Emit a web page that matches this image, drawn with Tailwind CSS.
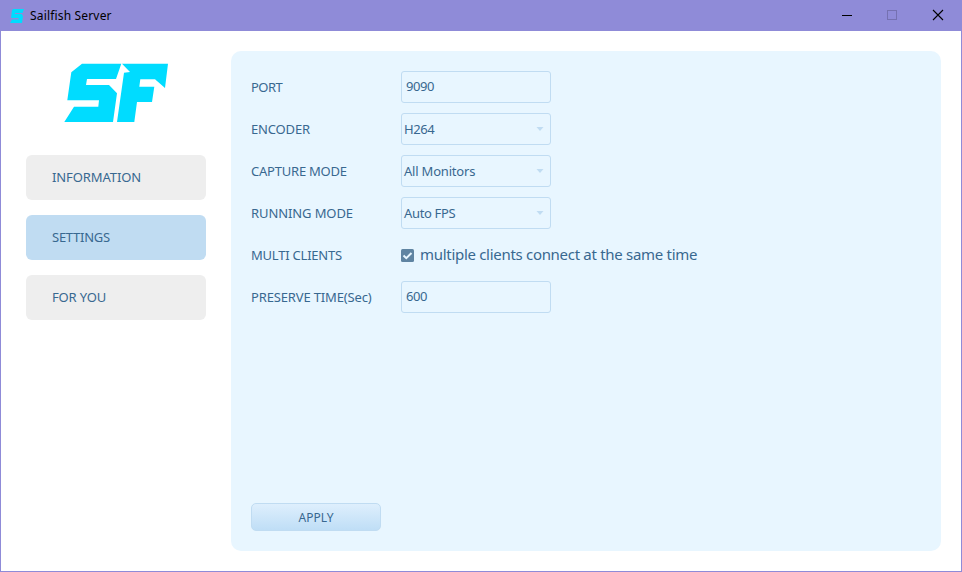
<!DOCTYPE html>
<html lang="en">
<head>
<meta charset="utf-8">
<title>Sailfish Server</title>
<script src="https://cdn.jsdelivr.net/npm/@tailwindcss/browser@4"></script>
</head>
<body class="overflow-hidden bg-white">
<div class="flex h-[572px] w-[962px] flex-col border border-[#8f8bd8] bg-white font-['Noto_Sans','Open_Sans',sans-serif] text-[13px] leading-[18px] text-[#386890]">
  <header class="flex h-[30px] shrink-0 items-center bg-[#8f8bd8] pl-[9px] text-black">
    <svg class="mr-[6px] mb-px h-[14px] w-[14px]" viewBox="0 0 14 14" fill="#00dcff"><path d="M3 0H14L12.500 4H5V5H11.500L13 7L12 14H0L2 10.500H8.500V9H1L2 1.500Z"/></svg>
    <span class="text-[12px] tracking-[0.17px]">Sailfish Server</span>
    <svg class="ml-auto h-[30px] w-[138px]" viewBox="0 0 138 30" fill="none" shape-rendering="crispEdges">
      <path d="M19 14.500H29" stroke="#000"/>
      <rect x="64.500" y="9.500" width="9" height="9" stroke="#7571b1"/>
      <path d="M110 9L120 19M120 9L110 19" stroke="#000" stroke-width="1.100" shape-rendering="auto"/>
    </svg>
  </header>
  <div class="flex flex-1">
    <nav class="flex w-[205px] flex-col pl-[25px]">
      <svg class="mt-8 mb-8 ml-[37px] h-[60px] w-[108px]" viewBox="63 63 108 60" fill="#00dcff">
        <path d="M82 63.700H121.300L116 79H87L86 85H109L117 93.300L113 122H64.300L74 106.700H98.300L99 100.300H67.300L71.300 72.300Z"/>
        <path d="M122 63.700H168L165 88L155 79.300H140.300L139.300 86.700H154.300L152 102H137L134.300 122H117L124 72.700L130 72Z"/>
      </svg>
      <div class="flex flex-col gap-[15px]">
        <div class="flex h-[45px] items-center rounded-md bg-[#eeeeee] pb-0.5 pl-[26px]"><span class="tracking-[-0.1px]">INFORMATION</span></div>
        <div class="flex h-[45px] items-center rounded-md bg-[#c0dcf2] pb-0.5 pl-[26px]"><span class="tracking-[-0.25px]">SETTINGS</span></div>
        <div class="flex h-[45px] items-center rounded-md bg-[#eeeeee] pb-0.5 pl-[26px]"><span class="tracking-[-0.15px]">FOR YOU</span></div>
      </div>
    </nav>
    <main class="mt-5 ml-[25px] flex h-[500px] w-[710px] flex-col rounded-[10px] bg-[#e8f6ff] px-5 pt-5 pb-5">
      <div class="grid grid-cols-[150px_1fr] items-center gap-y-[10px]">
        <span class="tracking-[-0.5px]">PORT</span>
        <div class="flex h-8 w-[150px] items-center rounded-[3px] border border-[#c0dcf2] px-1 pb-0.5 tracking-[-0.4px]">9090</div>
        <span class="tracking-[-0.15px]">ENCODER</span>
        <div class="flex h-8 w-[150px] items-center justify-between rounded-[3px] border border-[#c0dcf2] pr-[6px] pl-[2px]"><span class="tracking-[-0.4px]">H264</span><svg class="h-1 w-[8px]" viewBox="0 0 8 4" fill="#c0dcf2"><path d="M0.500 0H7.500L4 4Z"/></svg></div>
        <span class="tracking-[-0.22px]">CAPTURE MODE</span>
        <div class="flex h-8 w-[150px] items-center justify-between rounded-[3px] border border-[#c0dcf2] pr-[6px] pl-[2px]"><span class="tracking-[-0.2px]">All Monitors</span><svg class="h-1 w-[8px]" viewBox="0 0 8 4" fill="#c0dcf2"><path d="M0.500 0H7.500L4 4Z"/></svg></div>
        <span class="tracking-[-0.1px]">RUNNING MODE</span>
        <div class="flex h-8 w-[150px] items-center justify-between rounded-[3px] border border-[#c0dcf2] pr-[6px] pl-[2px]"><span class="tracking-[-0.35px]">Auto FPS</span><svg class="h-1 w-[8px]" viewBox="0 0 8 4" fill="#c0dcf2"><path d="M0.500 0H7.500L4 4Z"/></svg></div>
        <span class="tracking-[-0.22px]">MULTI CLIENTS</span>
        <div class="flex h-8 items-center"><svg class="mr-[6px] h-[13px] w-[13px]" viewBox="0 0 13 13" fill="none"><rect width="13" height="13" rx="1.500" fill="#5f84a2"/><path d="M2.500 6.500L5.300 9.200L10.500 4" stroke="#e8f6ff" stroke-width="2"/></svg><span class="pb-0.5 text-[15px] tracking-[-0.3px]">multiple clients connect at the same time</span></div>
        <span class="tracking-[-0.15px]">PRESERVE TIME(Sec)</span>
        <div class="flex h-8 w-[150px] items-center rounded-[3px] border border-[#c0dcf2] px-1 pb-0.5 tracking-[-0.4px]">600</div>
      </div>
      <button class="mt-auto h-7 w-[130px] rounded-[5px] border border-[#c0dcf2] bg-linear-to-b from-[#deeffd] to-[#bfdef6] pt-px text-[12px]">APPLY</button>
    </main>
  </div>
</div>
</body>
</html>
